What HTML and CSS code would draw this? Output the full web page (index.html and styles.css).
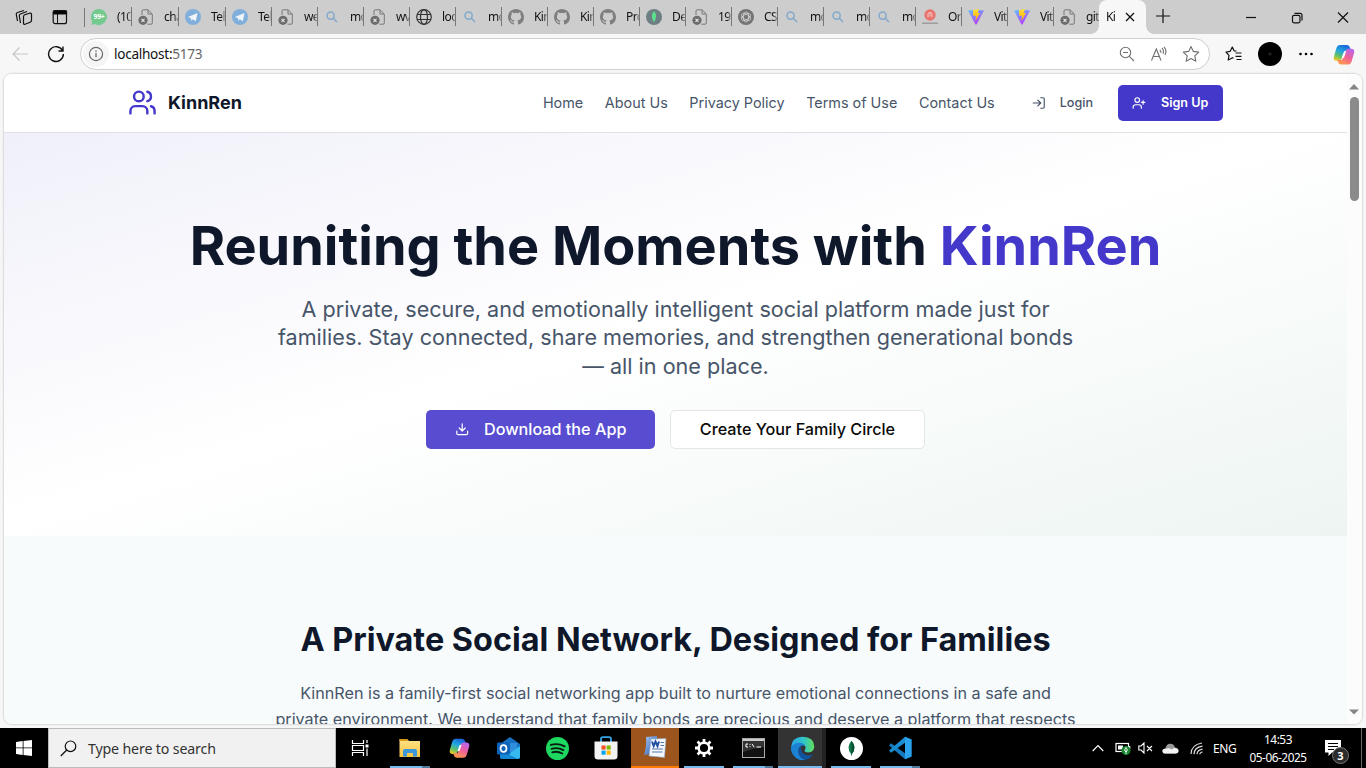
FILE: index.html
```html
<!DOCTYPE html>
<html lang="en">
<head>
<meta charset="utf-8">
<title>KinnRen</title>
<link rel="stylesheet" href="styles.css">
</head>
<body>
<svg class="defs" aria-hidden="true">
  <defs>
    <linearGradient id="gv" x1="0" y1="0" x2="0.5" y2="1"><stop offset="0" stop-color="#5fc3ff"/><stop offset="1" stop-color="#b63dff"/></linearGradient>
    <linearGradient id="gy" x1="0" y1="0" x2="0" y2="1"><stop offset="0" stop-color="#ffe23b"/><stop offset="1" stop-color="#ffa800"/></linearGradient>
    <linearGradient id="gc1" x1="0.6" y1="0" x2="0.2" y2="1"><stop offset="0" stop-color="#1866d8"/><stop offset="0.4" stop-color="#24a8e0"/><stop offset="0.7" stop-color="#5cc06a"/><stop offset="1" stop-color="#f0cb20"/></linearGradient>
    <linearGradient id="gc2" x1="0.8" y1="0" x2="0.3" y2="1"><stop offset="0" stop-color="#b565f0"/><stop offset="0.5" stop-color="#f0609a"/><stop offset="1" stop-color="#ff9a4a"/></linearGradient>
    <linearGradient id="ge" x1="0" y1="0.3" x2="1" y2="0.3"><stop offset="0" stop-color="#2aa5e6"/><stop offset="0.55" stop-color="#30c5c8"/><stop offset="1" stop-color="#62df5a"/></linearGradient>
    <linearGradient id="gf" x1="0" y1="0" x2="0" y2="1"><stop offset="0" stop-color="#ffe28a"/><stop offset="1" stop-color="#f9c440"/></linearGradient>
    <linearGradient id="gw" x1="0" y1="0" x2="1" y2="1"><stop offset="0" stop-color="#a9cbf5"/><stop offset="1" stop-color="#2050a8"/></linearGradient>
  </defs>
  <symbol id="dead" viewBox="0 0 16 16"><path d="M4 6V2Q4 .8 5.200 .8H10L14.300 5V14Q14.300 15.200 13.100 15.200H9.500M10 1V5H14" fill="none" stroke="#777"/><circle cx="5" cy="11.300" r="4.600" fill="#6d6d6d"/><path d="M3.500 9.800L6.500 12.800M6.500 9.800L3.500 12.800" stroke="#e4e4e4" stroke-width="1.200"/></symbol>
  <symbol id="tg" viewBox="0 0 16 16"><circle cx="8" cy="8" r="8" fill="#80afdc"/><path d="M3 8L12.500 4L10.800 12.300L7.800 10.200L6.300 11.700L6 9.300Z" fill="#f0f5fa"/></symbol>
  <symbol id="mag" viewBox="0 0 16 16"><circle cx="6.600" cy="6.600" r="3.600" fill="none" stroke="#82a9cc" stroke-width="1.500"/><path d="M9.300 9.300L13 13" stroke="#82a9cc" stroke-width="1.600"/></symbol>
  <symbol id="globe" viewBox="0 0 16 16"><g fill="none" stroke="#333" stroke-width="1.200"><circle cx="8" cy="8" r="7.300"/><ellipse cx="8" cy="8" rx="3.500" ry="7.300"/><path d="M1.300 5.500H14.700M1.300 10.500H14.700"/></g></symbol>
  <symbol id="gh" viewBox="0 0 16 16"><path fill="#7f7f7f" d="M8 0C3.580 0 0 3.580 0 8c0 3.540 2.290 6.530 5.470 7.590.4.070.55-.17.55-.38 0-.19-.01-.82-.01-1.490-2.010.37-2.530-.49-2.690-.94-.09-.23-.48-.94-.82-1.130-.28-.15-.68-.52-.01-.53.63-.01 1.080.58 1.230.82.72 1.210 1.870.87 2.330.66.070-.52.28-.87.51-1.070-1.780-.2-3.640-.89-3.640-3.950 0-.87.31-1.590.82-2.150-.08-.2-.36-1.020.08-2.120 0 0 .67-.21 2.200.82a7.600 7.600 0 0 1 4 0c1.530-1.040 2.200-.82 2.200-.82.44 1.100.16 1.920.08 2.120.51.56.82 1.270.82 2.150 0 3.070-1.870 3.750-3.650 3.950.29.25.54.73.54 1.480 0 1.070-.01 1.930-.01 2.200 0 .21.15.46.55.38A8 8 0 0 0 16 8c0-4.420-3.580-8-8-8z"/></symbol>
  <symbol id="mdb" viewBox="0 0 16 16"><circle cx="8" cy="8" r="8" fill="#6e7f84"/><path d="M8 2Q12 7 8.300 12.500L8 14L7.700 12.500Q4 7 8 2Z" fill="#5ce08c"/></symbol>
  <symbol id="gpt" viewBox="0 0 16 16"><circle cx="8" cy="8" r="8" fill="#757575"/><g fill="none" stroke="#ddd" stroke-width=".7"><ellipse cx="8" cy="8" rx="2.600" ry="5"/><ellipse cx="8" cy="8" rx="2.600" ry="5" transform="rotate(60 8 8)"/><ellipse cx="8" cy="8" rx="2.600" ry="5" transform="rotate(120 8 8)"/></g></symbol>
  <symbol id="red" viewBox="0 0 16 16"><circle cx="8" cy="6" r="5.700" fill="#e8736d"/><path d="M6 8.500V5Q6 3.500 8 3.500T10 5V8.500M8 4V7.500" fill="none" stroke="#f7d0cc" stroke-width=".9"/><path d="M0 14.200H16" stroke="#999" stroke-width="1.400"/></symbol>
  <symbol id="vite" viewBox="0 0 16 16"><path d="M0 1.500L8 .8L16 1.500L8.500 15.500H7.500Z" fill="url(#gv)"/><path d="M5 1L11 0L9.700 4H12L7.500 12L8 6.800H5.200Z" fill="url(#gy)"/></symbol>
  <symbol id="wa" viewBox="0 0 16 16"><path d="M8 0A8 8 0 1 1 4 15L.5 16L1.300 12.500A8 8 0 0 1 8 0Z" fill="#74c98f"/></symbol>
  <symbol id="copilot" viewBox="0 0 24 24"><path d="M8 2H15Q17.500 2 18.300 5L19 7.500H15Q12.500 7.500 11.700 10.300L9.800 16Q9 18.500 6.500 18.500H4Q.5 18.500 1.500 14L4 5.500Q5 2 8 2Z" fill="url(#gc1)"/><path d="M16 22.500H9Q6.500 22.500 5.700 19.500L5 17.800H8Q10.500 17.800 11.300 15L13.500 8.500Q14.400 6 17 6H20Q23.500 6.500 22.500 10.500L20 19Q19 22.500 16 22.500Z" fill="url(#gc2)"/><path d="M12.300 8.500H14.300L12 15.500H9.500Z" fill="#fff"/></symbol>
</svg>
<div class="desktop">
  <div class="tabbar">
    <div class="tabtools">
      <svg width="18" height="18" viewBox="0 0 18 18" class="ln"><path d="M2.500 13L1.300 6.500Q1 5 2.500 4.500L9 2.500M5.500 15L4.300 8Q4 6.500 5.500 6L12 3.500M8.500 15.500V8.700Q8.500 7.300 9.800 6.800L14.500 5.200Q16.500 4.600 16.500 6.500V12.300Q16.500 13.700 15.200 14.200L10 16.200Q8.500 16.700 8.500 15.500Z"/></svg>
      <svg width="16" height="16" viewBox="0 0 16 16" class="ln"><rect x="1.200" y="1.700" width="13.300" height="13" rx="2"/><path d="M1.500 2H14.500V5H1.500Z" fill="#000"/><path d="M5.500 5V14.500" stroke-width="1"/></svg>
    </div>
    <div class="tabs">
      <div class="tab wide"><span class="wa"><svg><use href="#wa"/></svg><b>99+</b></span><span class="tt">(10</span></div>
      <div class="tab wide"><svg><use href="#dead"/></svg><span class="tt">cha</span></div>
      <div class="tab wide"><svg><use href="#tg"/></svg><span class="tt">Tel</span></div>
      <div class="tab"><svg><use href="#tg"/></svg><span class="tt">Tel</span></div>
      <div class="tab"><svg><use href="#dead"/></svg><span class="tt">we</span></div>
      <div class="tab"><svg><use href="#mag"/></svg><span class="tt">mo</span></div>
      <div class="tab"><svg><use href="#dead"/></svg><span class="tt">wv</span></div>
      <div class="tab"><svg><use href="#globe"/></svg><span class="tt">loc</span></div>
      <div class="tab"><svg><use href="#mag"/></svg><span class="tt">mo</span></div>
      <div class="tab"><svg><use href="#gh"/></svg><span class="tt">Kir</span></div>
      <div class="tab"><svg><use href="#gh"/></svg><span class="tt">Kir</span></div>
      <div class="tab"><svg><use href="#gh"/></svg><span class="tt">Pro</span></div>
      <div class="tab"><svg><use href="#mdb"/></svg><span class="tt">De</span></div>
      <div class="tab"><svg><use href="#dead"/></svg><span class="tt">19</span></div>
      <div class="tab"><svg><use href="#gpt"/></svg><span class="tt">CS</span></div>
      <div class="tab"><svg><use href="#mag"/></svg><span class="tt">mo</span></div>
      <div class="tab"><svg><use href="#mag"/></svg><span class="tt">mo</span></div>
      <div class="tab"><svg><use href="#mag"/></svg><span class="tt">mo</span></div>
      <div class="tab"><svg><use href="#red"/></svg><span class="tt">Or</span></div>
      <div class="tab"><svg><use href="#vite"/></svg><span class="tt">Vit</span></div>
      <div class="tab"><svg><use href="#vite"/></svg><span class="tt">Vit</span></div>
      <div class="tab last"><svg><use href="#dead"/></svg><span class="tt">git</span></div>
      <div class="tab active"><span class="tt">Ki</span><svg class="ln" viewBox="0 0 16 16"><path d="M4 4L12 12M12 4L4 12" stroke-width="1.300"/></svg></div>
    </div>
    <svg class="ln plus" width="16" height="16" viewBox="0 0 16 16"><path d="M8 1V15M1 8H15"/></svg>
    <div class="wincontrols">
      <svg class="ln" width="12" height="12" viewBox="0 0 12 12"><path d="M1 5.500H11"/></svg>
      <svg class="ln" width="12" height="12" viewBox="0 0 12 12"><rect x="1.500" y="3.300" width="7.500" height="7.500" rx="1.500"/><path d="M3.500 1.300H9Q11 1.300 11 3.300V8.500"/></svg>
      <svg class="ln" width="12" height="12" viewBox="0 0 12 12"><path d="M1 .5L11 10.500M11 .5L1 10.500"/></svg>
    </div>
  </div>

  <div class="toolbar">
    <svg class="back" width="18" height="18" viewBox="0 0 18 18"><path d="M17 9H2M8.500 2.500L2 9L8.500 15.500" fill="none" stroke="#c6c6c6" stroke-width="1.200"/></svg>
    <svg class="ln" width="18" height="18" viewBox="0 0 18 18"><path d="M15.500 5.500A7.400 7.400 0 1 0 16.400 9M16 1.500V6H11.500" stroke-width="1.400"/></svg>
    <div class="address">
      <span class="info"><svg width="16" height="16" viewBox="0 0 16 16"><circle cx="8" cy="8" r="6.600" fill="none" stroke="#6a6a6a" stroke-width="1.200"/><path d="M8 7V11.300M8 4.500V5.900" stroke="#6a6a6a" stroke-width="1.300"/></svg></span>
      <span class="url">localhost:<i>5173</i></span>
      <span class="addricons">
        <svg width="16" height="16" viewBox="0 0 16 16"><g><circle cx="6.500" cy="6.500" r="5.200"/><path d="M10.300 10.300L15 15M4 6.500H9"/></g></svg>
        <svg width="18" height="16" viewBox="0 0 18 16"><g><path d="M1.500 14.500L6.300 3L11 14.500M3.200 10.500H9.400M9.800 3.800Q11.200 5 10.800 6.800M11.900 2.200Q14.300 4.500 13 7.800M13.900 .8Q17.300 4.300 15 9"/></g></svg>
        <svg width="18" height="18" viewBox="0 0 18 18"><g><path d="M9 1.500L11.300 6.400L16.700 7.100L12.800 10.800L13.800 16.200L9 13.600L4.200 16.200L5.200 10.800L1.300 7.100L6.700 6.400Z" stroke-linejoin="round"/></g></svg>
      </span>
    </div>
    <div class="toolright">
      <svg class="ln" width="18" height="16" viewBox="0 0 18 16"><path d="M11.500 5L9.200 5L7.300 1L5.200 5.300L1 6L4 9.300L3.200 14L7.500 11.700L8.500 12.300M10.500 7H16.500M10.500 10.300H16.500M11.500 13.500H16.500" stroke-linejoin="round"/></svg>
      <span class="avatar"></span>
      <svg width="16" height="4" viewBox="0 0 16 4"><circle cx="2.500" cy="2" r="1.300"/><circle cx="8" cy="2" r="1.300"/><circle cx="13.500" cy="2" r="1.300"/></svg>
      <svg width="24" height="23"><use href="#copilot"/></svg>
    </div>
  </div>

  <div class="viewport">
    <div class="page">
      <header class="site-header">
        <div class="brand">
          <svg class="lucide" width="29" height="29" viewBox="0 0 24 24"><path d="M16 21v-2a4 4 0 0 0-4-4H6a4 4 0 0 0-4 4v2"/><circle cx="9" cy="7" r="4"/><path d="M22 21v-2a4 4 0 0 0-3-3.870"/><path d="M16 3.130a4 4 0 0 1 0 7.750"/></svg>
          <span>KinnRen</span>
        </div>
        <nav>
          <a>Home</a><a>About Us</a><a>Privacy Policy</a><a>Terms of Use</a><a>Contact Us</a>
        </nav>
        <span class="login"><svg class="lucide" width="14" height="14" viewBox="0 0 24 24"><path d="M15 3h4a2 2 0 0 1 2 2v14a2 2 0 0 1-2 2h-4"/><path d="M10 17l5-5-5-5M15 12H2"/></svg><span>Login</span></span>
        <span class="signup"><svg class="lucide" width="14" height="14" viewBox="0 0 24 24"><path d="M16 21v-2a4 4 0 0 0-4-4H6a4 4 0 0 0-4 4v2"/><circle cx="9" cy="7" r="4"/><path d="M19 8v6M22 11h-6"/></svg><span>Sign Up</span></span>
      </header>
      <section class="hero">
        <h1>Reuniting the Moments with <em>KinnRen</em></h1>
        <p>A private, secure, and emotionally intelligent social platform made just for<br>families. Stay connected, share memories, and strengthen generational bonds<br>— all in one place.</p>
        <div class="actions">
          <span class="btn primary"><svg class="lucide" width="14.400" height="14.400" viewBox="0 0 24 24"><path d="M21 15v4a2 2 0 0 1-2 2H5a2 2 0 0 1-2-2v-4M7 10l5 5 5-5M12 15V3"/></svg><span>Download the App</span></span>
          <span class="btn outline"><span>Create Your Family Circle</span></span>
        </div>
      </section>
      <section class="about">
        <h2>A Private Social Network, Designed for Families</h2>
        <p>KinnRen is a family-first social networking app built to nurture emotional connections in a safe and<br>private environment. We understand that family bonds are precious and deserve a platform that respects</p>
      </section>
    </div>
    <div class="scrollbar">
      <svg width="10" height="6" viewBox="0 0 10 6"><path d="M0 5.500L5 0L10 5.500Z"/></svg>
      <span class="thumb"></span>
      <svg class="down" width="10" height="6" viewBox="0 0 10 6"><path d="M0 .5L5 5.500L10 .5Z"/></svg>
    </div>
  </div>

  <div class="taskbar">
    <span class="start"><svg width="16" height="16" viewBox="0 0 16 16"><path d="M0 2L6.700 1V7.500H0ZM7.500 .9L16 0V7.500H7.500ZM0 8.300H6.700V15L0 14ZM7.500 8.300H16V16L7.500 15Z" fill="#fff"/></svg></span>
    <div class="search"><svg width="17" height="17" viewBox="0 0 17 17" class="ln"><circle cx="10.500" cy="6.300" r="5.300"/><path d="M6.700 10L.8 16" stroke-width="1.300"/></svg><span>Type here to search</span></div>
    <div class="apps">
      <span class="app"><svg width="18" height="16" viewBox="0 0 18 16"><path d="M1.500 0V3.500H12.500V0M1.500 16V12.500H12.500V16M1.500 5.500H12.500V10.500H1.500ZM16 0V3M16 8.500V16" fill="none" stroke="#fff" stroke-width="1.200"/><rect x="14.500" y="4.500" width="3" height="3" fill="#fff"/></svg></span>
      <span class="app run stack"><svg width="22" height="20" viewBox="0 0 22 20"><path d="M.5 1H8L10 3H21V19H.5Z" fill="url(#gf)"/><path d="M.5 1H8L9 3H.5Z" fill="#d99a16"/><path d="M4 18.500V13Q4 11 6 11H16Q18 11 18 13V18.500H14V15H8V18.500Z" fill="#3c96da"/></svg></span>
      <span class="app"><svg width="23" height="22" viewBox="0 0 24 24"><use href="#copilot" width="24" height="24"/></svg></span>
      <span class="app"><svg width="25" height="24" viewBox="0 0 25 24"><path d="M4 8L14 1L24 8V21Q24 22.500 22.500 22.500H4Z" fill="#176fc1"/><path d="M7 7H21V15L14 18L7 14Z" fill="#2f8fdd"/><path d="M24 8V21Q24 23 22 23H6L24 10Z" fill="#35b9ef"/><path d="M4 14L22 23H6Q4 23 4 21Z" fill="#1588d4"/><rect x="1" y="6.500" width="13" height="12" rx="1.200" fill="#0d63b8"/><ellipse cx="7.500" cy="12.500" rx="3" ry="3.400" fill="none" stroke="#fff" stroke-width="1.700"/></svg></span>
      <span class="app"><svg width="23" height="23" viewBox="0 0 24 24"><circle cx="12" cy="12" r="12" fill="#1ed760"/><path d="M5 8.300Q12.500 6 19.500 9.800M5.800 12.300Q12.300 10.400 18.200 13.700M6.500 16Q12 14.400 17 17.200" fill="none" stroke="#0b1a10" stroke-width="1.900" stroke-linecap="round"/></svg></span>
      <span class="app"><svg width="24" height="24" viewBox="0 0 24 24"><path d="M7 7V3Q7 1.200 9 1.200H15Q17 1.200 17 3V7" fill="none" stroke="#33a5e4" stroke-width="1.800"/><path d="M.5 5.500H23.500V20Q23.500 23.500 20 23.500H4Q.5 23.500 .5 20Z" fill="#f3f3f3"/><path d="M7.500 9.500H11.600V13.600H7.500Z" fill="#f25022"/><path d="M12.600 9.500H16.700V13.600H12.600Z" fill="#7fba00"/><path d="M7.500 14.600H11.600V18.700H7.500Z" fill="#00a4ef"/><path d="M12.600 14.600H16.700V18.700H12.600Z" fill="#ffb900"/></svg></span>
      <span class="app alert"><svg width="24" height="24" viewBox="0 0 24 24"><path d="M3 2L14 1V18L1 20Q4 10 3 2Z" fill="url(#gw)"/><path d="M8 4L23 3.500L21.500 22.500L6 21Z" fill="#f4f7fb" stroke="#8ba3c9" stroke-width=".6"/><path d="M9 6.500L10.700 11L12.500 6.500L14.500 11L16 6.500" fill="none" stroke="#2450a4" stroke-width="2"/><path d="M17.500 7.500H21M17.500 10.500H21M9 14H20M9 17H19.500" stroke="#5878ad" stroke-width="1.200"/></svg></span>
      <span class="app run"><svg width="20" height="20" viewBox="0 0 20 20"><circle cx="10" cy="10" r="5.300" fill="none" stroke="#fff" stroke-width="2.500"/><path d="M10 1V4M10 16V19M1 10H4M16 10H19M3.600 3.600L5.700 5.700M14.300 14.300L16.400 16.400M16.400 3.600L14.300 5.700M5.700 14.300L3.600 16.400" stroke="#fff" stroke-width="2.800"/></svg></span>
      <span class="app run stack"><svg width="23" height="20" viewBox="0 0 23 20"><rect x=".5" y=".5" width="22" height="19" fill="#111" stroke="#aaa"/><path d="M1 1H22V3H1Z" fill="#ccc"/><path d="M1 3H22V9Q12 10 1 14Z" fill="#343434"/><path d="M6 6H4V9H6M8 6.200V7M8 8.200V9M10 5.800L12 9.200M14.500 9H19" fill="none" stroke="#fff"/></svg></span>
      <span class="app run current"><svg width="25" height="25" viewBox="0 0 24 24"><path d="M1 11Q2 1 12 .8Q23 1 23.300 10Q23 15.500 17.500 15.800Q13.500 15.800 14 13.500Q16 11.500 14 9Q9 4 1 11Z" fill="url(#ge)"/><path d="M1 11Q5 5 11 6.800Q14 8 14.500 9.500Q9 8 8 14Q8 21 15 22.800Q9 24.500 4.500 20Q.5 16 1 11Z" fill="#1c83d4"/><path d="M11 9Q8 11 8 15Q9 22 15 22.700Q20 21.500 22 17.700Q17 19.500 13 17Q9.500 14 11 9Z" fill="#12539e"/></svg></span>
      <span class="app run"><svg width="23" height="23" viewBox="0 0 24 24"><circle cx="12" cy="12" r="12" fill="#fff"/><path d="M12 4Q18 11 12.600 17.500L12 20L11.400 17.500Q6 11 12 4Z" fill="#12774b"/><path d="M12 4Q18 11 12.600 17.500L12 20Z" fill="#0b5135"/></svg></span>
      <span class="app run stack"><svg width="24" height="24" viewBox="0 0 24 24"><path d="M17 .8L23.500 3.500V20.500L17 23.200L1 9.500L3 7.300L17 17.300Z" fill="#1479bd"/><path d="M17 .8L1 14.500L3 16.700L17 6.700Z" fill="#1c8cd0"/><path d="M17 .8L23.500 3.500V20.500L17 23.200Z" fill="#2aa3ec"/></svg></span>
    </div>
    <div class="tray">
      <svg width="12" height="8" viewBox="0 0 12 8"><path d="M.7 7L6 1.500L11.300 7" fill="none" stroke="#fff" stroke-width="1.200"/></svg>
      <svg class="bat" width="16" height="13" viewBox="0 0 16 13"><rect x="1" y="1.500" width="12.500" height="8" fill="none" stroke="#fff" stroke-width="1.200"/><path d="M3 3.500H8V7.500H3Z" fill="#fff"/><path d="M14 4H15.300V7H14Z" fill="#fff"/><circle cx="11" cy="8.500" r="4.500" fill="#17852f"/><path d="M11 5.500Q14 8.500 11 10Q8 8.500 11 5.500ZM11 8V12" fill="none" stroke="#fff" stroke-width=".9"/></svg>
      <svg class="vol" width="15" height="12" viewBox="0 0 15 12"><path d="M.8 4V8H3L6 11V1L3 4ZM9 4L14 9M14 4L9 9" fill="none" stroke="#fff" stroke-width="1.100"/></svg>
      <svg class="cloud" width="17" height="11" viewBox="0 0 17 11"><path d="M3 10.500Q.5 10.500 .5 8T3.300 5.500Q4.500 .5 8.500 .8Q12 1 13 4.500Q16.500 4.800 16.500 7.600T13.500 10.500Z" fill="#999"/><path d="M3 10.500Q.5 10.500 .5 8T4 5.800Q7 4.500 9.500 6.500Q12 4 14.500 5.500Q16.500 6 16.500 8T13.500 10.500Z" fill="#f4f4f4"/></svg>
      <svg class="wifi" width="14" height="13" viewBox="0 0 14 13"><path d="M1 12Q1 3 12 1M4 12.300Q4 5.500 12.500 4.200M7 12.300Q7.300 8 12.500 7.200M9.800 12.300Q10 10.300 12.500 10" fill="none" stroke="#ddd" stroke-width="1.200"/></svg>
      <span class="lang">ENG</span>
      <span class="clock"><span>14:53</span><span>05-06-2025</span></span>
      <span class="notif"><svg width="16" height="16" viewBox="0 0 16 16"><path d="M0 0H16V12.500H7L3.500 16V12.500H0Z" fill="#fff"/><path d="M3 3.500H13M3 6.500H13M3 9.500H9" stroke="#000"/></svg><b>3</b></span>
    </div>
  </div>
</div>
</body>
</html>
```
FILE: styles.css
```css
* { box-sizing: border-box; }
body { margin: 0; overflow: hidden; font-family: "Noto Sans", sans-serif; }
svg { flex: none; display: block; }
.defs { position: absolute; width: 0; height: 0; }
.ln { fill: none; stroke: #111; stroke-width: 1.2; }
.desktop { width: 1366px; height: 768px; display: flex; flex-direction: column; background: #f7f7f7; }

.tabbar { height: 34px; flex: none; display: flex; align-items: center; background: #cdcdcd; }
.tabtools { width: 84px; flex: none; display: flex; gap: 19px; padding-left: 15px; align-items: center; }
.tabs { display: flex; height: 34px; flex: none; border-left: 1px solid transparent; background: linear-gradient(#777, #777) 0 8px / 1px 19px no-repeat border-box; }
.tab { width: 46px; height: 19px; margin-top: 7px; display: flex; align-items: center; gap: 10px; padding-left: 6px; border-right: 1px solid #777; }
.tab.wide { width: 47px; }
.tab svg { width: 16px; height: 16px; }
.tt { flex: 1; min-width: 0; overflow: hidden; white-space: nowrap; font-size: 12px; line-height: 17px; padding-bottom: 1px; letter-spacing: -.6px; color: #111; -webkit-mask-image: linear-gradient(90deg, #000 70%, rgba(0,0,0,.3)); mask-image: linear-gradient(90deg, #000 70%, rgba(0,0,0,.3)); }
.tab.last { width: 45px; border-right: 0; }
.tab.active { position: relative; width: 47px; height: 34px; margin: 0; padding: 0 8px 0 7px; gap: 4px; border: 0; border-radius: 8px 8px 0 0; background: #f7f7f7; }
.tab.active::before, .tab.active::after { content: ""; position: absolute; bottom: 0; width: 8px; height: 8px; }
.tab.active::before { left: -8px; background: radial-gradient(circle at 0 0, transparent 7.5px, #f7f7f7 8px); }
.tab.active::after { right: -8px; background: radial-gradient(circle at 100% 0, transparent 7.5px, #f7f7f7 8px); }
.tab.active .tt { flex: none; width: 12px; }
.wa { display: grid; align-items: center; justify-items: center; width: 16px; flex: none; }
.wa svg, .wa b { grid-area: 1 / 1; }
.wa b { font-size: 7px; line-height: 16px; color: #fff; letter-spacing: -.3px; }
.plus { margin-left: 9px; margin-top: -2px; }
.wincontrols { margin-left: auto; display: flex; gap: 34px; padding: 1px 17px 0 0; }

.toolbar { height: 40px; flex: none; display: flex; align-items: center; padding-left: 11px; }
.back { margin-right: 18px; }
.address { width: 1130px; height: 32px; margin-left: 15px; display: flex; align-items: center; border: 1px solid #cfcfcf; border-radius: 16px; background: #fff; padding: 0 9px 0 2px; }
.info { width: 26px; height: 26px; border-radius: 50%; background: #f5f5f5; display: flex; align-items: center; justify-content: center; }
.url { margin-left: 5px; padding-bottom: 1px; font-size: 13.6px; letter-spacing: -.28px; color: #111; }
.url i { font-style: normal; color: #666; }
.addricons { margin-left: auto; display: flex; align-items: center; gap: 14.5px; }
.addricons g { fill: none; stroke: #707070; stroke-width: 1.1; }
.toolright { flex: 1; display: flex; align-items: center; padding-left: 15px; }
.avatar { width: 24px; height: 24px; border-radius: 50%; background: radial-gradient(circle, #222 0 1px, #000 2px); margin: 0 16px 0 15px; }
.toolright svg:last-child { margin-left: 18px; }

.viewport { height: 650px; margin: 0 4px 4px; flex: none; display: flex; overflow: hidden; border-radius: 8px; background: #fff; box-shadow: 0 0 1.5px 1px #d8d8d8; }
.page { width: 1343px; flex: none; height: 650px; overflow: hidden; font-family: Inter, sans-serif; background: #f8fbfc; }
.lucide { fill: none; stroke: currentColor; stroke-width: 2; stroke-linecap: round; stroke-linejoin: round; }
.site-header { height: 59px; display: flex; align-items: center; padding: 0 124px 0 124px; background: #fff; border-bottom: 1px solid #dfe1e5; }
.brand { display: flex; align-items: center; gap: 11px; padding-bottom: 2px; color: #4338ca; }
.brand span { font-size: 18px; font-weight: 700; color: #0f172a; }
nav { margin-left: auto; padding-bottom: 2px; display: flex; gap: 21.6px; font-size: 14.4px; color: #475569; }
.login, .signup { display: flex; align-items: center; gap: 14px; font-size: 12.6px; font-weight: 500; color: #475569; }
.login span, .signup span, .btn span { padding-bottom: 1.5px; }
.login { margin-left: 37px; }
.signup { width: 105px; height: 36px; margin-left: 25px; padding-left: 14px; gap: 15px; border-radius: 5px; background: #4338ca; color: #fff; font-weight: 600; }

.hero { height: 403.4px; padding-top: 86.4px; text-align: center; background: linear-gradient(to bottom right, #f0f0fa, #fff 48%, #edf5f2); }
h1 { margin: 0 0 21.6px; font-size: 54px; line-height: 54px; font-weight: 700; color: #0f172a; white-space: nowrap; }
h1 em { font-style: normal; color: #4338ca; }
.hero p { margin: 0 0 29.7px; font-size: 21.6px; line-height: 28.5px; color: #475569; white-space: nowrap; }
.actions { display: flex; justify-content: center; gap: 15px; }
.btn { height: 39px; display: flex; align-items: center; justify-content: center; gap: 15px; border-radius: 5px; font-size: 16.2px; font-weight: 500; }
.primary { width: 229px; background: #584dd0; color: #fff; }
.outline { width: 255px; border: 1px solid #e2e5e9; background: #fff; color: #0a0a0a; }
.about { padding-top: 86.4px; text-align: center; }
h2 { margin: 0 0 23.6px; font-size: 32.4px; line-height: 34px; font-weight: 700; color: #0f172a; }
.about p { margin: 0; font-size: 16.2px; line-height: 26px; color: #475569; white-space: nowrap; }
.scrollbar { flex: 1; display: flex; flex-direction: column; align-items: center; padding: 10px 1px 9px 0; background: #fcfcfc; fill: #858585; }
.thumb { width: 9px; height: 104px; margin-top: 7px; border-radius: 5px; background: #8b8b8b; }
.down { margin-top: auto; }

.taskbar { height: 40px; flex: none; display: flex; background: #000; color: #fff; }
.start { width: 48px; display: flex; align-items: center; justify-content: center; }
.search { width: 288px; display: flex; align-items: center; gap: 11px; padding-left: 11px; background: #f1f1f1; border: 1px solid #bbb; color: #333; font-size: 14.2px; letter-spacing: -.15px; white-space: nowrap; }
.apps { display: flex; }
.app { width: 48px; height: 40px; margin-right: 1.05px; display: flex; align-items: center; justify-content: center; }
.apps .app:first-child { margin-right: 2px; }
.run { background: linear-gradient(#76b9ed, #76b9ed) 50% 100% / 40px 2px no-repeat; }
.stack { background: linear-gradient(90deg, #76b9ed 32px, #4e7a9d 32px) 50% 100% / 40px 2px no-repeat; }
.alert { background: #9b551d; border-bottom: 2px solid #ff7a00; }
.current { background: linear-gradient(#76b9ed, #76b9ed) 0 100% / 44px 2px no-repeat, linear-gradient(90deg, #333 44px, #222 44px); }
.tray { flex: 1; display: flex; align-items: center; justify-content: flex-end; border-right: 1px solid #666; margin-right: 4px; }
.bat { margin-left: 11px; }
.vol { margin-left: 7px; }
.cloud { margin-left: 9px; }
.wifi { margin-left: 11px; }
.lang { width: 24px; margin-left: 9px; font-size: 12px; letter-spacing: -.4px; }
.clock { width: 62px; margin-left: 10px; padding-bottom: 1px; display: flex; flex-direction: column; align-items: center; font-size: 11.8px; line-height: 18px; letter-spacing: -.45px; white-space: nowrap; }
.notif { position: relative; width: 27px; height: 16px; margin: 0 9px 0 16px; }
.notif b { position: absolute; left: 7px; top: 7px; width: 17px; height: 17px; border: 1px solid #777; border-radius: 50%; background: #2b2b2b; font-size: 11px; line-height: 15px; text-align: center; }
```
